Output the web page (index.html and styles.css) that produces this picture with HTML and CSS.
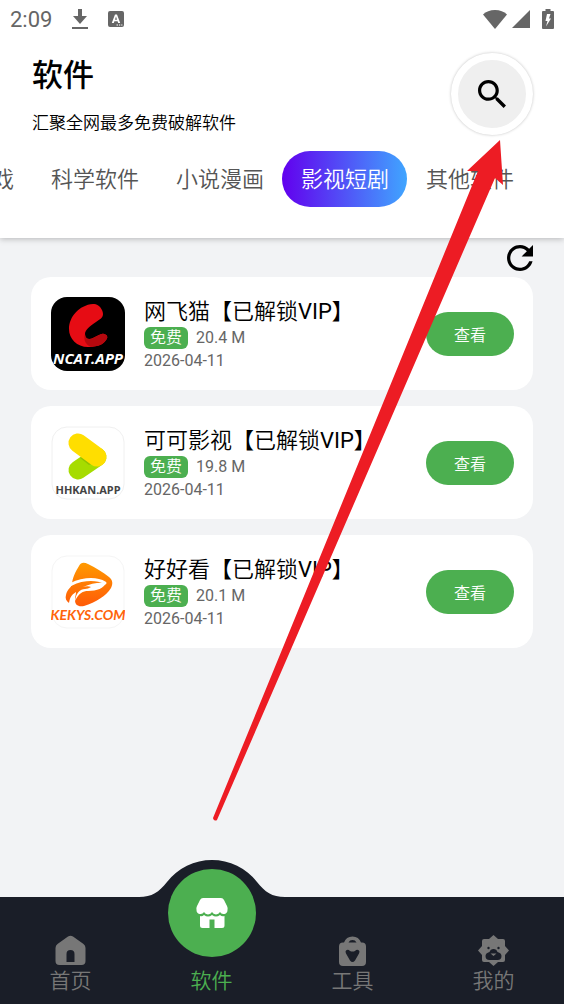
FILE: index.html
```
<!DOCTYPE html>
<html lang="zh-CN">
<head>
	<meta charset="UTF-8">
	<meta name="viewport" content="width=device-width, initial-scale=1">
	<title>软件</title>
	<link rel="stylesheet" href="styles.css">
</head>
<body>
	<header class="header">
		<div class="status">
			<span class="time">2:09</span>
			<svg width="16" height="20" viewBox="0 0 16 20"><path d="M6 0h4v7h5l-7 8-7-8h5zM0 18h16v2H0z"/></svg>
			<svg width="16" height="16" viewBox="0 0 16 16"><path fill-rule="evenodd" d="M2 0h12a2 2 0 0 1 2 2v12a2 2 0 0 1-2 2H2a2 2 0 0 1-2-2V2a2 2 0 0 1 2-2zM7 3.500L3.800 12h2l.6-1.800h3.200l.6 1.800h2L9 3.500zM8 5.500l1 3.200H7zM8.500 13.500v1H10v-1zM11 13.500v1h1.200v-1zM13.200 13.500v1h1.200v-1z"/></svg>
			<div class="signals">
				<svg width="24" height="19" viewBox="0 0 24 19"><path d="M12 19L0 4.500C3 1.500 7 0 12 0s9 1.500 12 4.500z"/></svg>
				<svg width="18" height="18" viewBox="0 0 18 18"><path d="M18 0v18H0z"/></svg>
				<svg class="battery" width="12" height="20" viewBox="0 0 12 20"><path fill-rule="evenodd" d="M3.500 0h5v2H11a1 1 0 0 1 1 1v16a1 1 0 0 1-1 1H1a1 1 0 0 1-1-1V3a1 1 0 0 1 1-1h2.500zM5 5L3.500 12h2L4 17.500 9 9.500H7L8.500 5z"/></svg>
			</div>
		</div>
		<div class="top">
			<div class="heading">
				<h1>软件</h1>
				<p>汇聚全网最多免费破解软件</p>
			</div>
			<button class="search" type="button" aria-label="搜索">
				<svg width="28" height="28" viewBox="3 3 17.500 17.500"><path d="M15.500 14h-.79l-.28-.27C15.410 12.590 16 11.110 16 9.500 16 5.910 13.090 3 9.500 3S3 5.910 3 9.500 5.910 16 9.500 16c1.610 0 3.090-.59 4.230-1.570l.27.28v.79l5 4.990L20.490 19l-4.990-5zm-6 0C7.010 14 5 11.990 5 9.500S7.010 5 9.500 5 14 7.010 14 9.500 11.990 14 9.500 14z"/></svg>
			</button>
		</div>
		<nav class="tabs">
			<a href="#">游戏</a>
			<a href="#">科学软件</a>
			<a href="#">小说漫画</a>
			<a href="#" class="current">影视短剧</a>
			<a href="#">其他软件</a>
		</nav>
	</header>

	<main class="main">
		<button class="refresh" type="button" aria-label="刷新">
			<svg width="26" height="26" viewBox="4 4 16 16"><path d="M17.650 6.350C16.200 4.900 14.210 4 12 4c-4.420 0-7.990 3.580-7.990 8s3.570 8 7.990 8c3.730 0 6.840-2.550 7.730-6h-2.080c-.82 2.330-3.040 4-5.650 4-3.310 0-6-2.690-6-6s2.690-6 6-6c1.660 0 3.140.69 4.220 1.780L13 11h7V4l-2.350 2.350z"/></svg>
		</button>
		<ul class="list">
			<li class="card">
				<svg class="logo" viewBox="0 0 74 74">
					<rect width="74" height="74" rx="16" fill="#000"/>
					<path fill="#e60c14" d="M42 7c5-1 10 5 10 10 0 4-3 5-7 8-6 4-11 8-11 12 0 5 4 6 8 4 5-2 8-5 11-4 4 1 4 4 2 6-3 5-10 7-18 7-11 0-19-8-19-18C18 20 28 8 42 7z"/>
					<path fill="#b5080e" d="M34 37c0 5 4 6 8 4 5-2 8-5 11-4 4 1 4 4 2 6-3 5-8 6-15 7-5-2-8-7-6-13z"/>
					<text class="ncat" x="37" y="67">NCAT.APP</text>
				</svg>
				<div class="info">
					<h2>网飞猫【已解锁VIP】</h2>
					<p class="meta"><span class="tag">免费</span>20.4 M</p>
					<p class="date">2026-04-11</p>
				</div>
				<button class="view" type="button">查看</button>
			</li>
			<li class="card">
				<svg class="logo" viewBox="0 0 74 74">
					<rect x="1" y="1" width="72" height="72" rx="15" fill="#fff" stroke="#f0f0f0"/>
					<path d="M27 44L46 31" stroke="#a6dc00" stroke-width="19" stroke-linecap="round"/>
					<path d="M29 32l9 7 8-3-8-9z" fill="#8fc400"/>
					<path d="M27 17L46 31" stroke="#ffde00" stroke-width="19" stroke-linecap="round"/>
					<text class="hhkan" x="37" y="68">HHKAN.APP</text>
				</svg>
				<div class="info">
					<h2>可可影视【已解锁VIP】</h2>
					<p class="meta"><span class="tag">免费</span>19.8 M</p>
					<p class="date">2026-04-11</p>
				</div>
				<button class="view" type="button">查看</button>
			</li>
			<li class="card">
				<svg class="logo" viewBox="0 0 74 74">
					<defs>
						<linearGradient id="orange" x1="0" y1="0" x2="0" y2="1">
							<stop offset="0" stop-color="#ff9a00"/>
							<stop offset="1" stop-color="#ff5a08"/>
						</linearGradient>
					</defs>
					<rect x="1" y="1" width="72" height="72" rx="15" fill="#fff" stroke="#f5f5f5"/>
					<path fill="url(#orange)" d="M28 11c2-4 5-4 9-2 8 4 15 8 21 13 4 3 4 7 2 11-5 8-15 14-27 18-6 1-9-1-9-6 0-4 1-5 1-8-5 3-6 6-7 11-3-2-4-5-3-8 1-5 4-7 6-10 0-7 4-14 7-19z"/>
					<path fill="none" stroke="#fff" stroke-width="3" stroke-linecap="round" d="M16 32C27 24 44 22 54 28"/>
					<path fill="#fff" d="M32 32c8-4 17-5 23-4-2 5-9 8-18 8-5 0-9 2-13 10 1-8 5-12 10-12 2 0 4-1 6-2-2-1-5-1-8 0z"/>
					<text class="kekys" x="37" y="65">KEKYS.COM</text>
				</svg>
				<div class="info">
					<h2>好好看【已解锁VIP】</h2>
					<p class="meta"><span class="tag">免费</span>20.1 M</p>
					<p class="date">2026-04-11</p>
				</div>
				<button class="view" type="button">查看</button>
			</li>
		</ul>
	</main>

	<nav class="bottom">
		<a href="#">
			<svg class="icon" viewBox="0 0 31 31"><path fill-rule="evenodd" d="M13 1.500q2.500-1.500 5 0l10.500 7.500q2 1.500 2 4V26q0 4-4 4h-22q-4 0-4-4V13q0-2.500 2-4zM11.500 27h8v-8a4 4 0 0 0-8 0z"/></svg>
			首页
		</a>
		<a href="#" class="current">
			<!-- raised bump with the round button -->
			<svg class="bump" viewBox="0 0 146 98">
				<path fill="#1a1e28" d="M0 39V38C13 38 20 33 28 23A57 57 0 0 1 118 23C126 33 133 38 146 38V39z"/>
				<circle cx="73" cy="54" r="44" fill="#4caf50"/>
				<path fill="#fff" d="M64 39h18q2 0 3 2l3 6q1 2 .5 4a4 4 0 0 1-7.500 2 4.500 4.500 0 0 1-8 0 4.500 4.500 0 0 1-8 0 4 4 0 0 1-7.500-2q-.5-2 .5-4l3-6q1-2 3-2z"/>
				<path fill="#fff" d="M61 57q2 1 4-1 4 3 8 0 4 3 8 0 2 2 4.500 1v9.500q0 2.500-2.500 2.500h-7.500v-8.500h-5V69H63.500Q61 69 61 66.500z"/>
			</svg>
			软件
		</a>
		<a href="#">
			<svg class="icon" viewBox="0 0 31 31"><path fill-rule="evenodd" d="M7 7.500a9 9 0 0 1 17 0h1q4 0 4 4V27q0 4-4 4H6q-4 0-4-4V11.500q0-4 4-4zM11.500 7.500h8a4.500 4.500 0 0 0-8 0zM9 15.500q2-1.500 4 .5 2.500 1 5 0 2-2 4-.5 1 1 0 3l-4 7q-2.500 3-5 0l-4-7q-1-2 0-3z"/></svg>
			工具
		</a>
		<a href="#">
			<svg class="icon" viewBox="0 0 31 31"><path d="M15.500 0l4.500 4h5q2 0 2 2v5l4 4.500-4 4.500v5q0 2-2 2h-5l-4.500 4-4.500-4H6q-2 0-2-2v-5l-4-4.500L4 11V6q0-2 2-2h5z"/><g fill="#1a1e28"><circle cx="10.500" cy="13" r="1.200"/><circle cx="20.500" cy="13" r="1.200"/><path d="M11.500 17q1-3 4-3t4 3q4 1 4 4 0 4-4 4h-8q-4 0-4-4 0-3 4-4z"/></g><path d="M12.500 18.500h6l-3 2.500z"/></svg>
			我的
		</a>
	</nav>

	<!-- pointer from the tab up to the search button -->
	<svg class="arrow" width="293" height="684" viewBox="0 0 293 684"><path fill="#ed1c24" d="M289 1l3 45-8-7L84 501 6 681a2.500 2.500 0 0 1-4-2L75 501 267 32H256z"/></svg>
</body>
</html>
```
FILE: styles.css
```
*{
	margin: 0;
	padding: 0;
	box-sizing: border-box;
}
body{
	position: relative;
	display: flex;
	flex-direction: column;
	min-height: 100vh;
	background: #f2f3f5;
	color: #000;
	font-family: Roboto, "Noto Sans CJK SC DemiLight", "Noto Sans CJK SC", sans-serif;
	overflow-x: hidden;
}
ul{
	list-style: none;
}
a{
	color: inherit;
	text-decoration: none;
}
button{
	border: none;
	background: none;
	font-family: inherit;
	cursor: pointer;
}
svg{
	display: block;
	flex-shrink: 0;
}
h1,h2{
	font-weight: 400;
}
.header{
	background: #fff;
	padding-bottom: 31px;
	box-shadow: 0 1px 6px rgba(0,0,0,0.25);
}
.status{
	display: flex;
	align-items: center;
	height: 38px;
	padding: 0 10px;
	gap: 20px;
	color: #666;
	fill: #666;
}
.time{
	font-size: 22px;
}
.signals{
	display: flex;
	align-items: center;
	gap: 5px;
	margin-left: auto;
}
.battery{
	margin-left: 7px;
}
.top{
	display: flex;
	justify-content: space-between;
	align-items: center;
	padding: 15px 31px 16px 32px;
}
.heading h1{
	font-family: Roboto, "Noto Sans CJK SC", sans-serif;
	font-size: 31px;
	line-height: 46px;
	font-weight: 500;
}
.heading p{
	margin-top: 12px;
	font-size: 17px;
	line-height: 24px;
}
.search{
	display: flex;
	align-items: center;
	justify-content: center;
	width: 82px;
	height: 82px;
	border: 7px solid #fff;
	border-radius: 50%;
	background: #efefef;
	box-shadow: 0 0 3px rgba(0,0,0,0.25);
}
.tabs{
	display: flex;
	justify-content: flex-end;
	padding-right: 32px;
	overflow: hidden;
}
.tabs a{
	flex-shrink: 0;
	padding: 2px 18px 0 19px;
	border-radius: 28px;
	font-size: 22px;
	line-height: 54px;
	font-weight: 300;
	color: #555;
}
.tabs .current{
	background: linear-gradient(to right, #6200ee, #40a5ff);
	color: #fff;
}
.main{
	flex: 1;
	padding: 0 31px 20px;
}
.refresh{
	display: block;
	margin: 7px 0 6px auto;
}
.list{
	display: flex;
	flex-direction: column;
	gap: 16px;
}
.card{
	display: flex;
	align-items: center;
	height: 113px;
	padding: 0 19px 0 20px;
	border-radius: 20px;
	background: #fff;
}
.logo{
	width: 74px;
	height: 74px;
}
.logo text{
	text-anchor: middle;
	font-weight: 700;
}
.ncat{
	fill: #fff;
	font-family: "Open Sans", sans-serif;
	font-size: 15px;
	font-style: italic;
}
.hhkan{
	fill: #444;
	font-family: "Noto Sans", sans-serif;
	font-size: 11px;
}
.kekys{
	fill: #ff640a;
	font-family: Lato, sans-serif;
	font-size: 14px;
	font-style: italic;
}
.info{
	flex: 1;
	margin-left: 19px;
}
.info h2{
	padding-top: 2px;
	font-size: 22px;
	line-height: 30px;
	white-space: nowrap;
}
.meta{
	display: flex;
	align-items: center;
	gap: 8px;
	color: #666;
	font-size: 16px;
	line-height: 22px;
}
.tag{
	padding: 0 6px;
	border-radius: 6px;
	background: #4caf50;
	color: #fff;
}
.date{
	color: #666;
	font-size: 16px;
	line-height: 24px;
}
.view{
	width: 88px;
	height: 44px;
	border-radius: 22px;
	background: #4caf50;
	color: #fff;
	font-size: 16px;
}
.bottom{
	display: flex;
	height: 107px;
	padding-bottom: 8px;
	background: #1a1e28;
}
.bottom a{
	position: relative;
	flex: 1;
	display: flex;
	flex-direction: column;
	align-items: center;
	justify-content: flex-end;
	color: #777;
	fill: #777;
	font-size: 21px;
	line-height: 30px;
	font-weight: 300;
}
.bottom .current{
	color: #4caf50;
}
.icon{
	width: 31px;
	height: 31px;
}
.bump{
	position: absolute;
	top: -38px;
	left: 50%;
	width: 146px;
	height: 98px;
	margin-left: -73px;
}
.arrow{
	position: absolute;
	top: 139px;
	left: 211px;
	pointer-events: none;
}
```
